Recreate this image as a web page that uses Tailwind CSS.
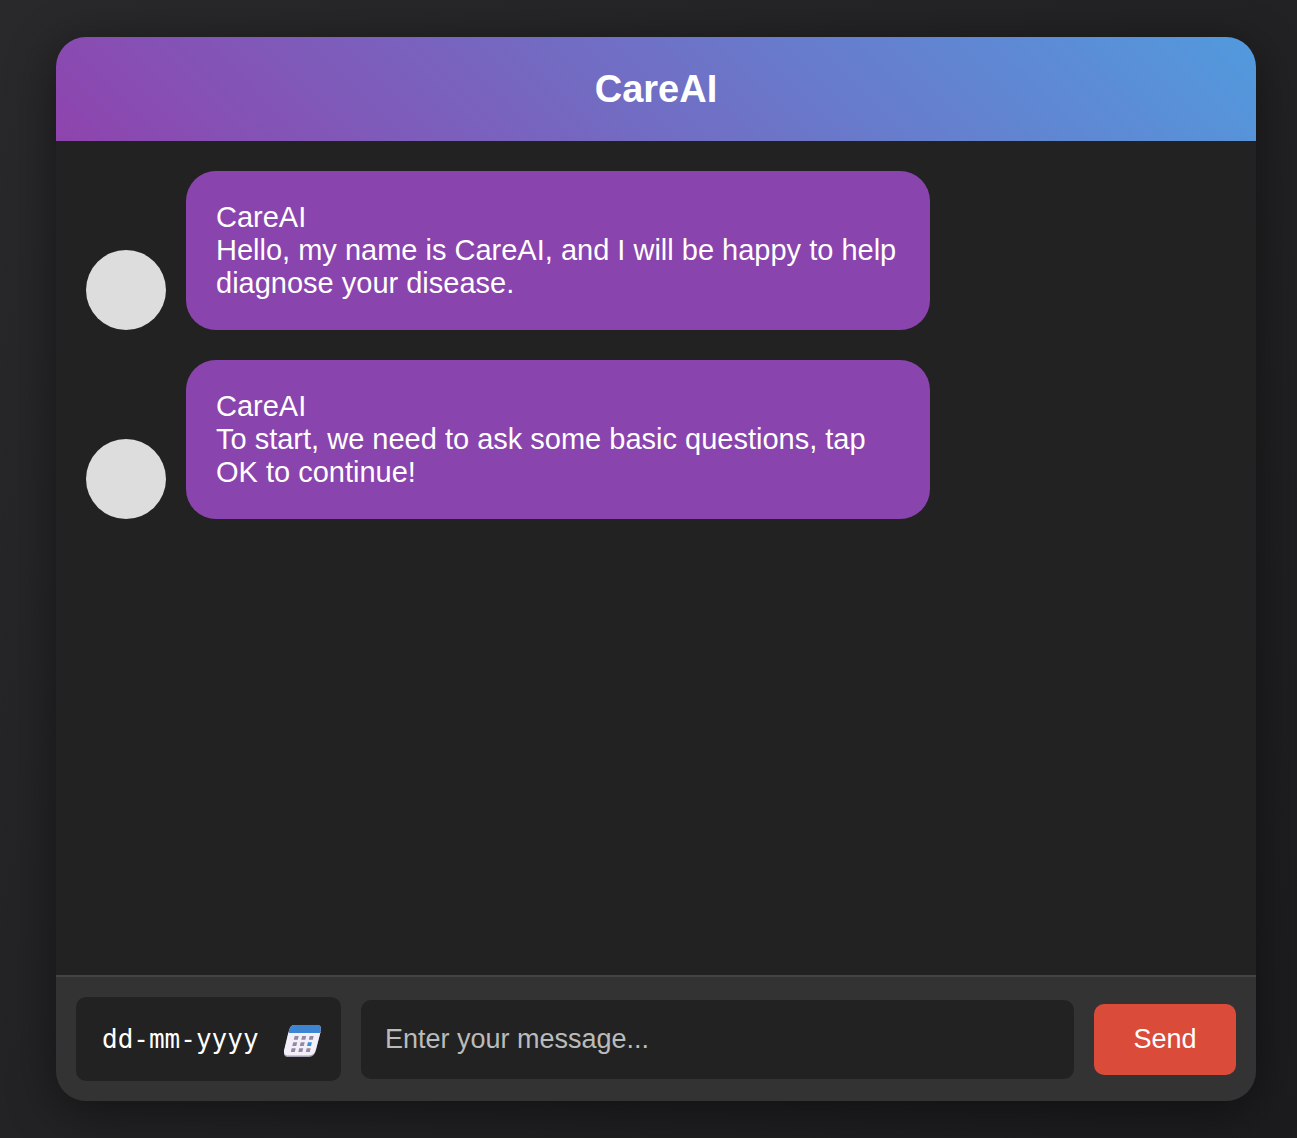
<!DOCTYPE html>
<html lang="en">
<head>
<meta charset="utf-8">
<meta name="viewport" content="width=device-width, initial-scale=1">
<title>CareAI</title>
<script src="https://cdn.jsdelivr.net/npm/@tailwindcss/browser@4"></script>
</head>
<body class="flex min-h-screen bg-linear-135 from-[#29292b] to-[#1c1c1e] py-[37px] pr-[41px] pl-14 font-['Liberation_Sans',Arial,sans-serif] text-white">
<section class="flex flex-1 flex-col overflow-hidden rounded-[30px] bg-[#222] shadow-[0_10px_50px_rgba(0,0,0,0.45)]">
  <header class="flex h-26 items-center justify-center bg-[linear-gradient(45deg,#8e44ad,#529add)]">
    <h1 class="text-[38px] leading-11 font-bold">CareAI</h1>
  </header>
  <main class="flex flex-1 flex-col gap-[30px] p-[30px] text-[29px] leading-[33px]">
    <article class="flex items-end gap-5">
      <div class="size-20 shrink-0 rounded-full bg-[#ddd]"></div>
      <div class="w-[744px] rounded-[30px] bg-[#8a44ad] p-[30px]">
        <div>CareAI</div>
        <p>Hello, my name is CareAI, and I will be happy to help diagnose your disease.</p>
      </div>
    </article>
    <article class="flex items-end gap-5">
      <div class="size-20 shrink-0 rounded-full bg-[#ddd]"></div>
      <div class="w-[744px] rounded-[30px] bg-[#8a44ad] p-[30px]">
        <div>CareAI</div>
        <p>To start, we need to ask some basic questions, tap OK to continue!</p>
      </div>
    </article>
  </main>
  <form class="flex items-center gap-5 border-t-2 border-[#444] bg-[#333] p-5 text-[27px]">
    <div class="flex h-21 w-[265px] shrink-0 items-center gap-5 rounded-[10px] bg-[#222] pr-5 pl-[26px]">
      <input type="text" aria-label="Date" placeholder="dd-mm-yyyy" class="h-10 min-w-0 flex-1 font-['DejaVu_Sans_Mono',monospace] text-[26px] placeholder:text-white">
      <button type="button" aria-label="Open calendar" class="shrink-0 pt-1">
        <svg class="h-8 w-[37px]" viewBox="283 1026 37 32">
          <path d="M293 1026h23q5 0 4 5l-5 20q-1.500 7-7 7h-20q-6 0-5-5l5-22q1.500-5 5-5z" fill="#a79fb3"/>
          <path d="M287.500 1033h32l-4.500 17q-1.500 6.500-7 6.500h-20q-6 0-5-5z" fill="#f3eff8"/>
          <path d="M287.500 1034l.7-3q1.500-5 6-5h21q5 0 4.600 4l-.8 4z" fill="#3d85d3"/>
          <path d="M293.700 1037h4l-.9 3.800h-4zM301.200 1037h4l-.9 3.800h-4zM308.700 1037h4l-.9 3.800h-4zM292.200 1043.200h4l-.9 3.800h-4zM299.700 1043.200h4l-.9 3.800h-4zM290.700 1049.300h4l-.9 3.800h-4zM298.200 1049.300h4l-.9 3.800h-4zM305.700 1049.300h4l-.9 3.800h-4z" fill="#9389a5"/>
          <path d="M306.900 1043.200h4l-.9 3.800h-4z" fill="#3d8fdb"/>
        </svg>
      </button>
    </div>
    <input type="text" aria-label="Message" placeholder="Enter your message..." class="h-[79px] min-w-0 flex-1 rounded-[10px] bg-[#222] px-6 placeholder:text-[#bbb]">
    <button type="submit" class="h-[71px] w-[142px] shrink-0 rounded-[10px] bg-[#da4b39]">Send</button>
  </form>
</section>
</body>
</html>
